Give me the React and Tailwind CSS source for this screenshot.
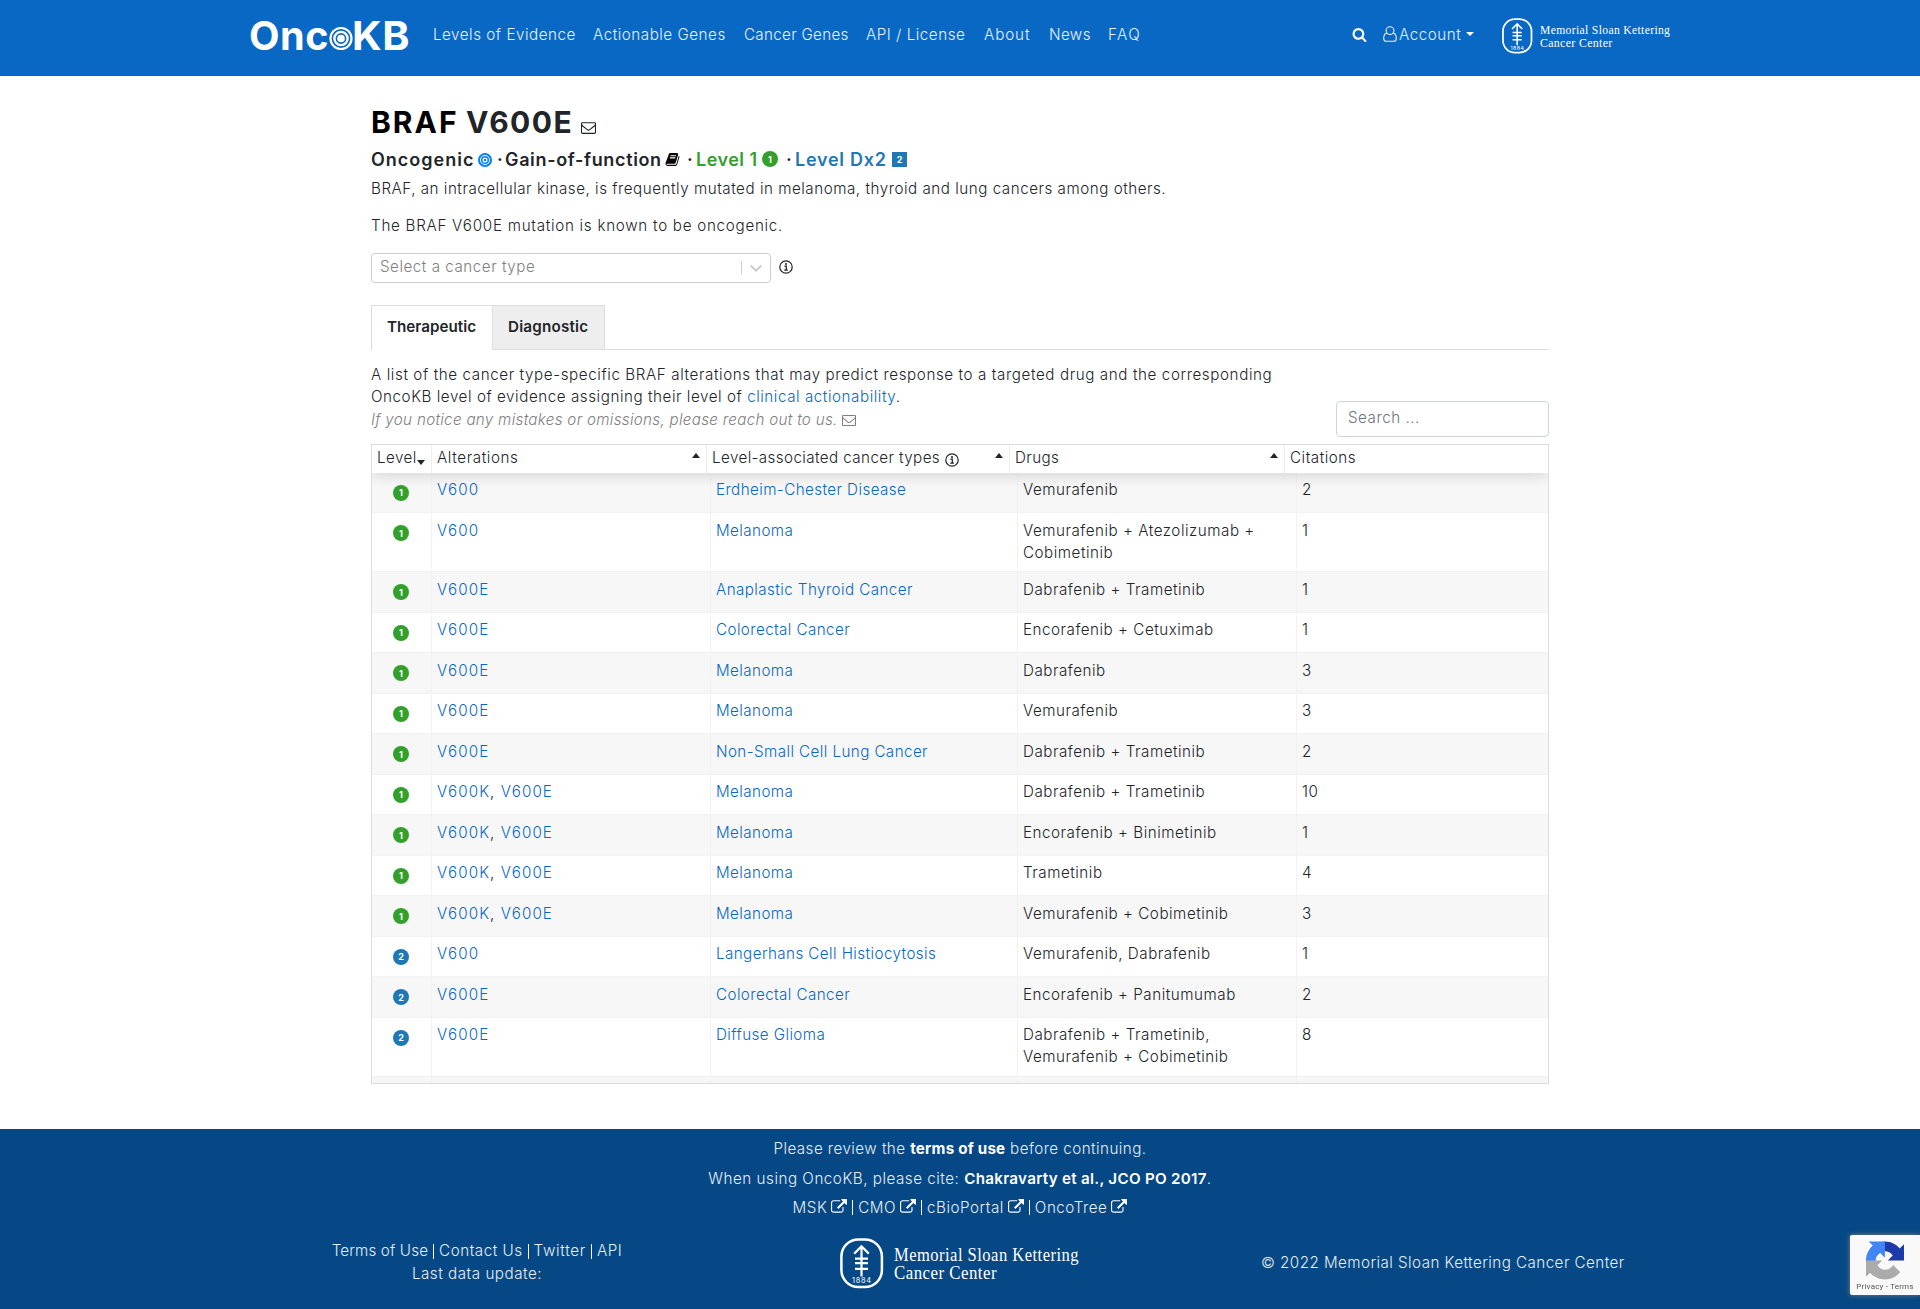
const FA = {
  envelope:
    "M1664 1504v-768q-32 36-69 66-268 206-426 338-51 43-83 67t-86.5 48.5-102.5 24.5h-2q-48 0-102.5-24.5t-86.5-48.5-83-67q-158-132-426-338-37-30-69-66v768q0 13 9.5 22.5t22.5 9.5h1472q13 0 22.5-9.5t9.5-22.5zm0-1051v-24.5l-.5-13-3-12.5-5.5-9-9-7.5-14-2.5h-1472q-13 0-22.5 9.5t-9.5 22.5q0 168 147 284 193 152 401 317 6 5 35 29.5t46 37.5 44.5 31.5 50.5 27.5 43 9h2q20 0 43-9t50.5-27.5 44.5-31.5 46-37.5 35-29.5q208-165 401-317 54-43 100.5-115.5t46.5-131.5zm128-37v1088q0 66-47 113t-113 47h-1472q-66 0-113-47t-47-113v-1088q0-66 47-113t113-47h1472q66 0 113 47t47 113z",
  external:
    "M1408 928v320q0 119-84.5 203.5t-203.5 84.5h-832q-119 0-203.5-84.5t-84.5-203.5v-832q0-119 84.5-203.5t203.5-84.5h704q14 0 23 9t9 23v64q0 14-9 23t-23 9h-704q-66 0-113 47t-47 113v832q0 66 47 113t113 47h832q66 0 113-47t47-113v-320q0-14 9-23t23-9h64q14 0 23 9t9 23zm384-864v512q0 26-19 45t-45 19-45-19l-176-176-652 652q-10 10-23 10t-23-10l-114-114q-10-10-10-23t10-23l652-652-176-176q-19-19-19-45t19-45 45-19h512q26 0 45 19t19 45z",
  search:
    "M1216 832q0-185-131.5-316.5t-316.5-131.5-316.5 131.5-131.5 316.5 131.5 316.5 316.5 131.5 316.5-131.5 131.5-316.5zm512 832q0 52-38 90t-90 38q-54 0-90-38l-343-342q-179 124-399 124-143 0-273.5-55.5t-225-150-150-225-55.5-273.5 55.5-273.5 150-225 225-150 273.5-55.5 273.5 55.5 225 150 150 225 55.5 273.5q0 220-124 399l343 343q37 37 37 90z",
  book:
    "M1703 478q40 57 18 129l-275 906q-19 64-76.5 107.5t-122.5 43.5h-923q-77 0-148.5-53.5t-99.5-131.5q-24-67-2-127 0-4 3-27t4-37q1-8-3-21.5t-3-19.5q2-11 8-21t16.5-23.5 16.5-23.5q23-38 45-91.5t30-91.5q3-10 .5-30t-.5-28q3-11 17-28t17-23q21-36 42-92t25-90q1-9-2.5-32t.5-28q4-13 22-30.5t22-22.5q19-26 42.5-84.5t27.5-96.5q1-8-3-25.5t-2-26.5q2-8 9-18t18-23 17-21q8-12 16.5-30.5t15-35 16-36 19.5-32 26.5-23.5 36-11.5 47.5 5.5l-1 3q38-9 51-9h761q74 0 114 56t18 130l-274 906q-36 119-71.5 153.5t-128.5 34.5h-869q-27 0-38 15-11 16-1 43 24 70 144 70h923q29 0 56-15.5t35-41.5l300-987q7-22 5-57 38 15 59 43zm-1064 2q-4 13 2 22.5t20 9.5h608q13 0 25.5-9.5t16.5-22.5l21-64q4-13-2-22.5t-20-9.5h-608q-13 0-25.5 9.5t-16.5 22.5zm-83 256q-4 13 2 22.5t20 9.5h608q13 0 25.5-9.5t16.5-22.5l21-64q4-13-2-22.5t-20-9.5h-608q-13 0-25.5 9.5t-16.5 22.5z",
};

function Icon({ name, className }) {
  return (
    <svg viewBox="0 0 1792 1792" fill="currentColor" className={className}>
      <path d={FA[name]} />
    </svg>
  );
}

function InfoIcon({ className }) {
  return (
    <svg viewBox="0 0 14 14" fill="none" stroke="currentColor" className={className}>
      <circle cx="7" cy="7" r="6.2" strokeWidth="1.2" />
      <path d="M5.4 6.2H7.3V10M5.2 10.2H8.9" strokeWidth="1.3" />
      <circle cx="7" cy="3.9" r="1" fill="currentColor" stroke="none" />
    </svg>
  );
}

function OncoLogo() {
  return (
    <svg width="162" height="46" viewBox="-1 -6 162 46" fill="#fff" className="shrink-0 overflow-visible">
      <g fontFamily="Inter, sans-serif" fontWeight="700" fontSize="40">
        <text x="-1" y="31.5" textLength="80" lengthAdjust="spacingAndGlyphs">Onc</text>
        <text x="102" y="31.5" textLength="58" lengthAdjust="spacingAndGlyphs">KB</text>
      </g>
      <circle cx="91" cy="20.5" r="11.6" />
      <g fill="none" stroke="#0968c3" strokeWidth="1.6">
        <circle cx="91" cy="20.5" r="8.6" />
        <circle cx="91" cy="20.5" r="4.6" />
      </g>
    </svg>
  );
}

/* Shield mark with the arrow and the two-line name */
function MskLogo({ className }) {
  return (
    <svg viewBox="0 0 240 51" className={`overflow-visible ${className}`}>
      <rect x="1.4" y="1.4" width="40.5" height="47.6" rx="17" fill="none" stroke="#fff" strokeWidth="2.5" />
      <g fill="none" stroke="#fff" strokeWidth="2.2">
        <path d="M21.5 8V38.5M14.2 15.6L21.5 8.3L28.8 15.6M15 20.6H28M15 25.2H28M15 30.8H28" />
      </g>
      <text x="12" y="45.4" textLength="19.5" fontFamily="Inter, sans-serif" fontSize="7.4" fontWeight="400" fill="#fff">1884</text>
      <g fontFamily="'Liberation Serif', serif" fontSize="18" fontWeight="400" fill="#fff">
        <text x="54" y="22.5" textLength="185" lengthAdjust="spacingAndGlyphs">Memorial Sloan Kettering</text>
        <text x="54" y="41" textLength="103" lengthAdjust="spacingAndGlyphs">Cancer Center</text>
      </g>
    </svg>
  );
}

function Header() {
  return (
    <header className="h-[76px] bg-[#0968c3] pl-[249px] text-white/90">
      <div className="flex h-[70px] items-center">
        <div className="w-[184px]">
          <OncoLogo />
        </div>
        <nav className="flex w-[918px]">
          <a className="w-[160px]">Levels of Evidence</a>
          <a className="w-[151px]">Actionable Genes</a>
          <a className="w-[122px] tracking-[0.3px]">Cancer Genes</a>
          <a className="w-[118px]">API / License</a>
          <a className="w-[65px] tracking-[0.9px]">About</a>
          <a className="w-[59px] tracking-[0.4px]">News</a>
          <a className="tracking-[1.4px]">FAQ</a>
        </nav>
        <Icon name="search" className="-mt-0.5 ml-px w-[15px] text-white" />
        <svg width="14" height="16" viewBox="0 0 14 16" fill="none" stroke="currentColor" strokeWidth="1.1" className="ml-[16px] -mt-0.5">
          <circle cx="7" cy="4.6" r="3.9" />
          <path d="M3.6 6.9C1.6 7.6.7 9.6.7 12.2c0 2 1 3.1 2.5 3.1h7.6c1.500 0 2.500-1.100 2.500-3.100 0-2.600-.9-4.600-2.900-5.300" />
        </svg>
        <span className="ml-[2px]">Account</span>
        <span className="-mt-0.5 ml-[5px] border-x-[4.500px] border-t-[4.500px] border-x-transparent border-t-white" />
        <MskLogo className="ml-[28px] mt-[2px] h-[36px] w-[169px]" />
      </div>
    </header>
  );
}

function Badge({ level, className = "" }) {
  const tone = level === 1 ? "bg-[#33a02c]" : "bg-[#1f78b4]";
  return (
    <span className={`flex size-4 items-center justify-center rounded-full text-[9px] leading-none font-bold tracking-normal text-white ${tone} ${className}`}>
      {level}
    </span>
  );
}

function Summary() {
  return (
    <section>
      <h1 className="mt-[24px] flex h-[44.500px] items-start text-[30px] leading-[45px] font-bold">
        <span className="w-[95px] tracking-[2px] text-black">BRAF</span>
        <span className="w-[115px] tracking-[1.5px]">V600E</span>
        <Icon name="envelope" className="mt-[20px] w-[15px]" />
      </h1>
      <h2 className="mt-px flex h-[27px] items-center text-[18px] leading-[27px] font-semibold tracking-[0.75px]">
        <span className="w-[107px] tracking-[1px]">Oncogenic</span>
        <svg width="14" height="14" viewBox="0 0 14 14" fill="none" stroke="#007fff" className="mt-px">
          <circle cx="7" cy="7" r="6" strokeWidth="2" />
          <circle cx="7" cy="7" r="3.300" strokeWidth="1.500" />
          <circle cx="7" cy="7" r="1.300" fill="#007fff" stroke="none" />
        </svg>
        <span className="ml-[5px] w-[8px]">·</span>
        <span className="w-[160px] tracking-[0.65px]">Gain-of-function</span>
        <Icon name="book" className="w-[15px] text-black" />
        <span className="ml-[7px] w-[9px]">·</span>
        <span className="w-[66px] tracking-[0.5px] text-[#33a02c]">Level 1</span>
        <Badge level={1} />
        <span className="ml-[8px] w-[9px]">·</span>
        <span className="w-[97px] text-[#1f78b4]">Level Dx2</span>
        <span className="flex size-[15px] items-center justify-center bg-[#1f78b4] text-[9px] leading-none font-bold tracking-normal text-white">
          2
        </span>
      </h2>
      <p className="mt-[5px]">
        BRAF, an intracellular kinase, is frequently mutated in melanoma, thyroid and lung cancers among others.
      </p>
      <p className="mt-[15px] tracking-[0.72px]">The BRAF V600E mutation is known to be oncogenic.</p>
      <div className="mt-[15px] flex items-center">
        <div className="flex h-[30px] w-[400px] items-center rounded-[4px] border border-[#ccc] pr-[7px] pl-2">
          <span className="grow text-[#808080]">Select a cancer type</span>
          <span className="h-[13px] w-px bg-[#ccc]" />
          <svg width="14" height="14" viewBox="0 0 14 14" fill="none" stroke="#ccc" strokeWidth="2" strokeLinecap="round" strokeLinejoin="round" className="ml-[7px]">
            <path d="M2.200 5L7 9.800L11.800 5" />
          </svg>
        </div>
        <InfoIcon className="mb-px ml-2 size-[14px]" />
      </div>
    </section>
  );
}

function Tabs() {
  return (
    <div className="mt-[22px] flex h-[45px] font-semibold tracking-[0.02px]">
      <div className="w-[121px] border-t border-l border-[#ddd] pt-[10px] pl-[15px]">Therapeutic</div>
      <div className="w-[113px] border border-[#ddd] bg-[#eee] pt-[10px] pl-[15px] tracking-[0.2px]">Diagnostic</div>
      <div className="grow border-b border-[#ddd]" />
    </div>
  );
}

const V600 = ["V600"];
const V600E = ["V600E"];
const V600KE = ["V600K", "V600E"];

const ROWS = [
  [1, V600, "Erdheim-Chester Disease", ["Vemurafenib"], 2],
  [1, V600, "Melanoma", ["Vemurafenib + Atezolizumab +", "Cobimetinib"], 1],
  [1, V600E, "Anaplastic Thyroid Cancer", ["Dabrafenib + Trametinib"], 1],
  [1, V600E, "Colorectal Cancer", ["Encorafenib + Cetuximab"], 1],
  [1, V600E, "Melanoma", ["Dabrafenib"], 3],
  [1, V600E, "Melanoma", ["Vemurafenib"], 3],
  [1, V600E, "Non-Small Cell Lung Cancer", ["Dabrafenib + Trametinib"], 2],
  [1, V600KE, "Melanoma", ["Dabrafenib + Trametinib"], 10],
  [1, V600KE, "Melanoma", ["Encorafenib + Binimetinib"], 1],
  [1, V600KE, "Melanoma", ["Trametinib"], 4],
  [1, V600KE, "Melanoma", ["Vemurafenib + Cobimetinib"], 3],
  [2, V600, "Langerhans Cell Histiocytosis", ["Vemurafenib, Dabrafenib"], 1],
  [2, V600E, "Colorectal Cancer", ["Encorafenib + Panitumumab"], 2],
  [2, V600E, "Diffuse Glioma", ["Dabrafenib + Trametinib,", "Vemurafenib + Cobimetinib"], 8],
];

function SortArrow({ className }) {
  return <span className={`shrink-0 border-x-[4.500px] border-x-transparent ${className}`} />;
}

function Table() {
  const up = "mt-[6px] border-b-[5px] border-b-[#212529]";
  return (
    <div className="mt-[7px] h-[640px] overflow-hidden border border-[#dcdcdc]">
      <div className="relative z-10 grid h-[28px] grid-cols-[60px_275px_303px_275px_1fr] bg-white shadow-[0_2px_15px_0_rgba(0,0,0,0.15)]">
        <div className="flex border-r border-[#ededed] pt-[2px] pl-[5px]">
          <span className="tracking-[0.4px]">Level</span>
          <SortArrow className="mt-[13px] h-0 border-t-[5px] border-t-[#212529]" />
        </div>
        <div className="flex justify-between border-r border-[#ededed] pt-[2px] pr-[6px] pl-[5px]">
          <span className="tracking-[0.6px]">Alterations</span>
          <SortArrow className={`h-0 ${up}`} />
        </div>
        <div className="flex border-r border-[#ededed] pt-[2px] pr-[6px] pl-[5px]">
          <span className="tracking-[0.4px]">Level-associated cancer types</span>
          <InfoIcon className="mt-[6px] ml-[5px] size-[14px]" />
          <SortArrow className={`ml-auto h-0 ${up}`} />
        </div>
        <div className="flex justify-between border-r border-[#ededed] pt-[2px] pr-[6px] pl-[5px]">
          <span className="tracking-[0.4px]">Drugs</span>
          <SortArrow className={`h-0 ${up}`} />
        </div>
        <div className="pt-[2px] pl-[5px]">Citations</div>
      </div>
      {ROWS.map(([level, alts, cancer, drugs, cites], i) => (
        <div
          key={i}
          className={`grid grid-cols-[60px_279px_307px_279px_1fr] border-b border-[#f2f2f2] odd:bg-white even:bg-[#f7f7f7] ${
            drugs.length > 1 ? "h-[59px]" : "h-[40.500px]"
          }`}
        >
          <div className="flex border-r border-[#f2f2f2] pt-[12px] pl-[21px]">
            <Badge level={level} />
          </div>
          <div className="border-r border-[#f2f2f2] pt-[6.500px] pl-[5px] tracking-[1.050px]">
            {alts.map((a, n) => (
              <span key={a}>
                {n > 0 && ", "}
                <a className="text-[#0968c3]">{a}</a>
              </span>
            ))}
          </div>
          <div className="border-r border-[#f2f2f2] pt-[6.500px] pl-[5px] tracking-[0.420px] text-[#0968c3]">{cancer}</div>
          <div className="border-r border-[#f2f2f2] pt-[6.500px] pl-[5px]">
            {drugs.map((d) => (
              <div key={d} className="leading-[22px]">{d}</div>
            ))}
          </div>
          <div className="pt-[6.500px] pl-[5px]">{cites}</div>
        </div>
      ))}
      <div className="grid h-[10px] grid-cols-[60px_279px_307px_279px_1fr] bg-[#f7f7f7]">
        <div className="border-r border-[#f2f2f2]" />
        <div className="border-r border-[#f2f2f2]" />
        <div className="border-r border-[#f2f2f2]" />
        <div className="border-r border-[#f2f2f2]" />
      </div>
    </div>
  );
}

function Bar() {
  return <span className="h-[15px] w-px bg-white" />;
}

function Ext({ children }) {
  return (
    <span className="flex items-center gap-1">
      {children}
      <Icon name="external" className="mb-px w-[16px] text-white" />
    </span>
  );
}

function Footer() {
  return (
    <footer className="mt-[45px] h-[180px] bg-[#064885] pt-[9.500px] text-white/90">
      <p className="text-center tracking-[0.450px]">
        Please review the <b className="font-bold tracking-[0.200px] text-white">terms of use</b> before continuing.
      </p>
      <p className="mt-[7.500px] text-center">
        When using OncoKB, please cite: <b className="font-semibold tracking-[0.280px] text-white">Chakravarty et al., JCO PO 2017</b>.
      </p>
      <div className="mt-[6px] flex items-center justify-center gap-[5px]">
        <Ext>MSK</Ext>
        <Bar />
        <Ext>CMO</Ext>
        <Bar />
        <Ext>cBioPortal</Ext>
        <Bar />
        <Ext>OncoTree</Ext>
      </div>
      <div className="mt-[19px] flex">
        <div className="ml-[277px] w-[400px] pt-[2px] text-center">
          <div className="flex items-center justify-center gap-[5px]">
            <span className="tracking-[0.150px]">Terms of Use</span>
            <Bar />
            <span>Contact Us</span>
            <Bar />
            <span className="tracking-[0.700px]">Twitter</span>
            <Bar />
            <span>API</span>
          </div>
          <div>Last data update:</div>
        </div>
        <MskLogo className="ml-[163px] h-[51px] w-[240px]" />
        <div className="ml-[181px] pt-[13.500px] tracking-[0.450px]">© 2022 Memorial Sloan Kettering Cancer Center</div>
      </div>
    </footer>
  );
}

function RecaptchaBadge() {
  return (
    <div className="fixed right-0 bottom-[14px] flex h-[60px] w-[70px] flex-col items-center rounded-l-[2px] bg-[#f9f9f9] pt-[6px] shadow-[0_0_5px_gray]">
      <svg width="38" height="39" viewBox="0 0 64 64">
        <path fill="#1c3aa9" d="M64 31.955l-.033-1.370V4.687l-7.160 7.160C50.948 4.674 42.033.093 32.050.093c-10.389 0-19.622 4.960-25.458 12.640l11.736 11.860a15.550 15.550 0 0 1 4.754-5.334c2.050-1.600 4.952-2.906 8.968-2.906.485 0 .86.057 1.135.163 4.976.393 9.288 3.140 11.828 7.124l-8.307 8.307 27.294.008" />
        <path fill="#4285f4" d="M31.862.094l-1.370.033H4.594l7.160 7.160C4.580 13.147 0 22.060 0 32.046c0 10.388 4.960 19.622 12.640 25.458l11.860-11.736a15.550 15.550 0 0 1-5.334-4.754c-1.600-2.050-2.906-4.952-2.906-8.968 0-.485.057-.86.163-1.135.393-4.976 3.140-9.288 7.124-11.828l8.307 8.307.008-27.295" />
        <path fill="#ababab" d="M.001 32.045l.033 1.370v25.898l7.160-7.160c5.860 7.173 14.774 11.754 24.760 11.754 10.388 0 19.622-4.960 25.458-12.640l-11.736-11.860a15.550 15.550 0 0 1-4.754 5.334c-2.050 1.600-4.952 2.906-8.968 2.906-.485 0-.86-.057-1.135-.163-4.976-.393-9.288-3.140-11.828-7.124l8.307-8.307-27.294-.008" />
      </svg>
      <span className="mt-[2px] font-[Roboto,sans-serif] text-[8px] leading-[10px] font-normal tracking-[0.200px] text-[#555]">Privacy - Terms</span>
    </div>
  );
}

export default function App() {
  return (
    <div className="h-[1309px] w-[1920px] overflow-hidden bg-white font-[Inter,sans-serif] text-[15.200px] leading-[22.500px] font-[350] tracking-[0.520px] whitespace-nowrap text-[#212529]">
      <Header />
      <main className="mx-auto w-[1178px]">
        <Summary />
        <Tabs />
        <div className="mt-[13px] flex h-[74px] items-end justify-between">
          <div className="mt-px self-start leading-[22.500px]">
            <div className="tracking-[0.590px]">
              A list of the cancer type-specific BRAF alterations that may predict response to a targeted drug and the corresponding
            </div>
            <div className="tracking-[0.550px]">
              OncoKB level of evidence assigning their level of <a className="text-[#0968c3]">clinical actionability</a>.
            </div>
            <div className="flex items-center text-[#808080] italic">
              <span className="tracking-[0.290px]">If you notice any mistakes or omissions, please reach out to us.</span>
              <Icon name="envelope" className="ml-[4px] w-[14px]" />
            </div>
          </div>
          <div className="h-[36px] w-[213px] rounded-[4px] border border-[#ced4da] pt-[5px] pl-[11px] text-[#6c757d]">Search ...</div>
        </div>
        <Table />
      </main>
      <Footer />
      <RecaptchaBadge />
    </div>
  );
}
